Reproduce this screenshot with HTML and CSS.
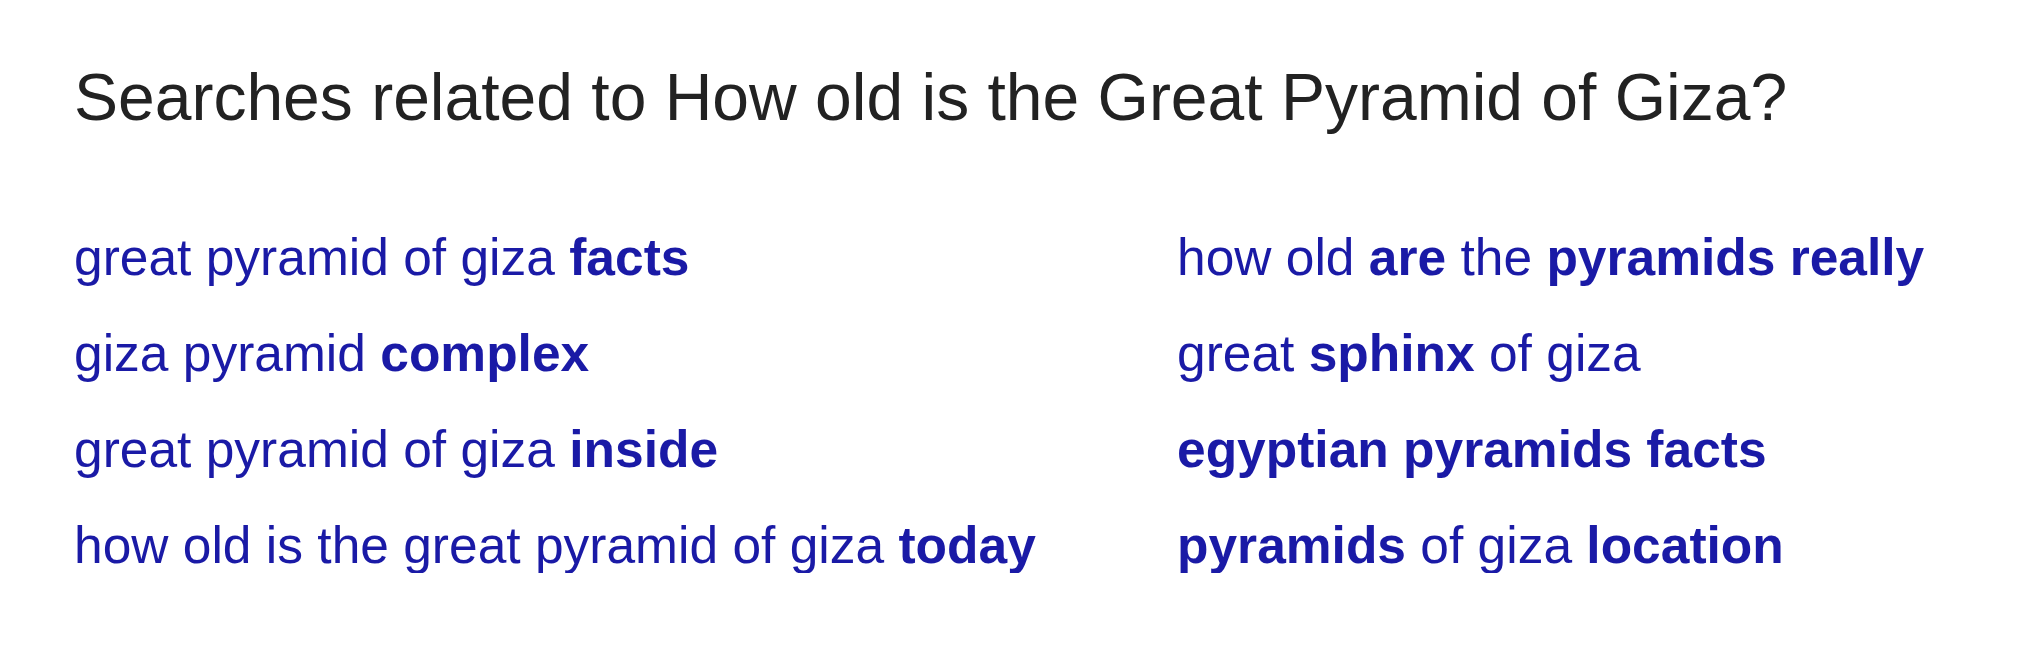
FILE: index.html
```html
<!DOCTYPE html>
<html lang="en">
<head>
  <meta charset="UTF-8" />
  <title>Searches related to How old is the Great Pyramid of Giza?</title>
  <link rel="stylesheet" href="styles.css">
</head>
<body>
  <div class="related">
    <h2>Searches related to How old is the Great Pyramid of Giza?</h2>

    <div class="related-grid">
      <a href="#">great pyramid of giza <b>facts</b></a>
      <a href="#">how old <b>are</b> the <b>pyramids really</b></a>
      <a href="#">giza pyramid <b>complex</b></a>
      <a href="#">great <b>sphinx</b> of giza</a>
      <a href="#">great pyramid of giza <b>inside</b></a>
      <a href="#"><b>egyptian pyramids facts</b></a>
      <a href="#">how old is the great pyramid of giza <b>today</b></a>
      <a href="#"><b>pyramids</b> of giza <b>location</b></a>
    </div>
  </div>
</body>
</html>
```

FILE: styles.css
```css
body {
  margin: 0;
  background-color: #fff;
  font-family: "Liberation Sans", Arial, sans-serif;
}

.related {
  padding: 64px 0 0 74px;
}

.related h2 {
  font-size: 66px;
  font-weight: normal;
  color: #222;
  margin: 0 0 99px 0;
  line-height: 1;
}

.related-grid {
  display: grid;
  grid-template-columns: 1103px auto;
  row-gap: 40px;
}

.related-grid a {
  font-size: 51.5px;
  line-height: 56px;
  color: #1a1aa6;
  text-decoration: none;
}

.related-grid b {
  font-weight: bold;
}
```
